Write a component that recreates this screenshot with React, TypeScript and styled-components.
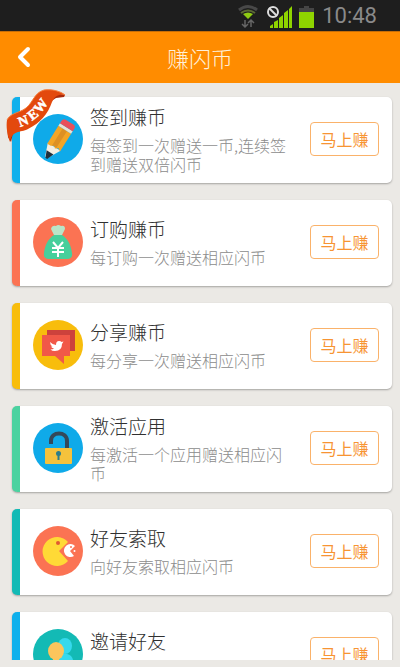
import React from "react";
import styled, { createGlobalStyle } from "styled-components";

const GlobalStyle = createGlobalStyle`
  * { box-sizing: border-box; }
  body {
    margin: 0;
    background: #ebe9e5;
    font-family: "Noto Sans CJK SC", sans-serif;
    font-weight: 300;
  }
`;

const Screen = styled.div`
  height: 100vh;
  display: flex;
  flex-direction: column;
  padding-bottom: 7px;
  overflow: hidden;
`;

const StatusBar = styled.div`
  flex: none;
  height: 31px;
  padding-right: 23px;
  display: flex;
  align-items: center;
  justify-content: flex-end;
  gap: 7px;
  background: #1e1e1e;
  color: #8a8a8a;
  font: 400 22px/30px Roboto, sans-serif;
`;

const StatusIcons = styled.svg`
  flex: none;
  display: block;
`;

const Header = styled.header`
  flex: none;
  height: 52px;
  display: grid;
  grid-template-columns: 48px 1fr 48px;
  align-items: center;
  background: #ff8c00;
  border-top: 1px solid #c66e08;
`;

const BackButton = styled.button`
  height: 48px;
  padding: 0 0 0 16px;
  border: 0;
  background: none;
  display: flex;
  align-items: center;
`;

const PageTitle = styled.h1`
  margin: 0;
  padding-bottom: 2px;
  color: #fff0d8;
  font-size: 22px;
  line-height: 32px;
  font-weight: 300;
  text-align: center;
`;

const TaskList = styled.ul`
  flex: 1;
  min-height: 0;
  margin: 0;
  padding: 14px 8px 0 12px;
  list-style: none;
  display: flex;
  flex-direction: column;
  gap: 17px;
  overflow: hidden;
`;

const Card = styled.li<{ $accent: string }>`
  position: relative;
  flex: none;
  min-height: 86px;
  padding: 0 13px 2px;
  display: flex;
  align-items: center;
  border-left: 8px solid ${(p) => p.$accent};
  border-radius: 5px;
  background: #fff;
  box-shadow: 0 1px 2px rgba(0, 0, 0, 0.3);
`;

const Badge = styled.svg`
  position: absolute;
  left: -14px;
  top: -9px;
`;

const TaskIcon = styled.svg`
  flex: none;
  display: block;
`;

const TaskText = styled.div`
  flex: 1;
  min-width: 0;
  padding: 0 14px 0 7px;
`;

const TaskTitle = styled.h2`
  margin: 0 0 7px;
  color: #303030;
  font-size: 19px;
  line-height: 24px;
  font-weight: 300;
`;

const TaskNote = styled.p`
  margin: 0;
  min-height: 19px;
  color: #8c8c8c;
  font-size: 16px;
  line-height: 19px;
`;

const EarnButton = styled.button`
  flex: none;
  width: 69px;
  height: 34px;
  padding: 0;
  border: 1px solid #fab26a;
  border-radius: 4px;
  background: #fff;
  color: #f79433;
  font: 400 16px/30px "Noto Sans CJK SC", sans-serif;
`;

const Pencil = () => (
  <>
    <circle cx="25" cy="25" r="25" fill="#0faae9" />
    <g transform="translate(13 43) rotate(32)">
      <path d="M-1 0 L-6 -13 H9 L2 0Z" fill="#f4eee2" />
      <path d="M0 1 L-3 -6 H5 L2 1Z" fill="#20303c" />
      <path d="M-6 -12 V-33 H9 V-12 L6 -14 L3 -12 L1 -14 L-2 -12Z" fill="#f3a526" />
      <path d="M-1 -33 H4 V-13 L1 -14 L-1 -13Z" fill="#dd9024" />
      <path d="M-6 -33 H9 V-36 H-6Z" fill="#e6e2d6" />
      <path d="M-6 -36 V-39 Q-6 -42 -3 -42 H6 Q9 -42 9 -39 V-36Z" fill="#e8505b" />
    </g>
  </>
);

const MoneyBag = () => (
  <>
    <circle cx="25" cy="25" r="25" fill="#fb7353" />
    <path d="M21 18 L18 12 Q19 8 23 9 Q25 7 28 9 Q32 8 32 12 L29 18Z" fill="#b9e5c8" />
    <path d="M21 18 H29 C35 22 38 28 39 36 Q40 42 34 42 H16 Q10 42 11 36 C12 28 15 22 21 18Z" fill="#46cf9b" />
    <path d="M20 25 L25 31 L30 25 M25 31 V40 M19 31 H31 M19 35 H31" fill="none" stroke="#fff" strokeWidth="2" />
  </>
);

const Chat = () => (
  <>
    <circle cx="25" cy="25" r="25" fill="#f8bd0c" />
    <path d="M14 10 H42 V31 H14Z" fill="#cd423c" />
    <path d="M9 15 H37 V36 H31 V44 L22 36 H9Z" fill="#f15848" />
    <path d="M17 22 Q20 25 23 25 Q23 21 26 21 Q28 21 28.5 22 L30.5 21.5 L29 24 Q29 31 22 31 Q19 31 17.500 29.500 Q20 29.500 21 28.500 Q18.500 28 18 26.500 H19.500 Q17 25 17 22Z" fill="#fff" />
  </>
);

const Lock = () => (
  <>
    <circle cx="25" cy="25" r="25" fill="#0faae9" />
    <path d="M18 21 V18 C18 8 34 8 34 18 V25" fill="none" stroke="#34495a" strokeWidth="4" />
    <rect x="12" y="25" width="27" height="16" rx="1" fill="#f5c23c" />
    <circle cx="25.500" cy="30.500" r="2.500" fill="#2c7d8b" />
    <path d="M24.500 31 H26.500 V37 H24.500Z" fill="#2c7d8b" />
  </>
);

const Muncher = () => (
  <>
    <circle cx="25" cy="25" r="25" fill="#fb7353" />
    <path d="M26 25 L35 35 A14.500 14.500 0 1 1 35 16Z" fill="#ffda36" />
    <circle cx="25" cy="17" r="2" fill="#e05a32" />
    <path d="M37 25 L41 30 A6.500 6.500 0 1 1 42 20Z" fill="#fff" />
    <circle cx="38" cy="21" r="1" fill="#fb7353" />
    <circle cx="41.500" cy="25" r="1" fill="#fff" />
  </>
);

const Friends = () => (
  <>
    <circle cx="25" cy="25" r="25" fill="#13bab5" />
    <ellipse cx="32" cy="17" rx="7" ry="8" fill="#36d9ed" />
    <path d="M24 31 Q25 26 30 25 H34 Q39 26 40 31 V34 H24Z" fill="#36d9ed" />
    <ellipse cx="23" cy="22" rx="8" ry="9" fill="#fbc55c" />
    <path d="M20 29 H26 V33 H34 V42 H11 V36 Q13 32 20 32Z" fill="#fbc55c" />
  </>
);

const NewRibbon = () => (
  <Badge width="62" height="56" viewBox="0 0 62 56" role="img" aria-label="NEW">
    <path d="M44 4 L59 7 L58 9 L50 10 L44 14Z" fill="#a92a0b" />
    <path d="M1 35 L14 40 L7 45 L5 54 L2 49Z" fill="#982109" />
    <path d="M1 32 C4 26 11 25 17 22 C27 17 27 5 38 2 C46 1 54 3 59 7 C52 6 49 8 46 14 C42 26 34 35 22 41 C14 45 6 42 4 54 C1 47 0 38 1 32Z" fill="#e3490d" />
    <path d="M1 32 C4 26 11 25 17 22 C27 17 27 5 38 2 C46 1 54 3 59 7" fill="none" stroke="#f57a37" strokeWidth="1" />
    <g fill="#fff" stroke="#fff" strokeWidth="0.5" fontFamily="Liberation Serif, serif" fontWeight="700" fontSize="14">
      <text x="14" y="39" transform="rotate(-20 14 39)">N</text>
      <text x="26" y="33" transform="rotate(-38 26 33)">E</text>
      <text x="34" y="26" transform="rotate(-52 34 26)">W</text>
    </g>
  </Badge>
);

const tasks = [
  { title: "签到赚币", note: "每签到一次赠送一币,连续签到赠送双倍闪币", accent: "#0fb0ec", Icon: Pencil, isNew: true },
  { title: "订购赚币", note: "每订购一次赠送相应闪币", accent: "#fb7353", Icon: MoneyBag },
  { title: "分享赚币", note: "每分享一次赠送相应闪币", accent: "#f8bd0c", Icon: Chat },
  { title: "激活应用", note: "每激活一个应用赠送相应闪币", accent: "#4bd2a0", Icon: Lock },
  { title: "好友索取", note: "向好友索取相应闪币", accent: "#13bab5", Icon: Muncher },
  { title: "邀请好友", note: "", accent: "#0fb0ec", Icon: Friends },
];

export default function App() {
  return (
    <Screen>
      <GlobalStyle />
      <StatusBar>
        <StatusIcons width="78" height="28" viewBox="0 0 78 28" aria-hidden="true">
          <path d="M2 8 Q11 1 20 8" fill="none" stroke="#484848" strokeWidth="3" />
          <path d="M4 11 Q11 6 18 11" fill="none" stroke="#5c6a35" strokeWidth="2" />
          <path d="M6 12 Q11 9 16 12 L11 17Z" fill="#8ecb12" />
          <path d="M8 18 V25 M5 22 L8 25 L11 22 M14 25 V18 M11 21 L14 18 L17 21" fill="none" stroke="#666" strokeWidth="1.500" />
          <path d="M33 26 V24 L36 22 V26Z M37 26 V20 L41 18 V26Z M42 26 V16 L46 13 V26Z M47 26 V11 L51 8 V26Z M52 26 V7 L55 4 V26Z" fill="#8fd400" />
          <circle cx="36" cy="10" r="5" fill="#1e1e1e" stroke="#ddd" strokeWidth="2" />
          <path d="M32 6 L40 14" stroke="#ddd" strokeWidth="2" />
          <path d="M67 4 H72 V6 H77 V11 H62 V6 H67Z" fill="#454545" />
          <path d="M62 10 H77 V26 H62Z" fill="#8fd400" />
        </StatusIcons>
        <time>10:48</time>
      </StatusBar>
      <Header>
        <BackButton type="button" aria-label="返回">
          <svg width="16" height="24" viewBox="0 0 16 24">
            <path d="M12 3 L4 11 L12 19" fill="none" stroke="#fff" strokeWidth="4" strokeLinecap="round" strokeLinejoin="round" />
          </svg>
        </BackButton>
        <PageTitle>赚闪币</PageTitle>
      </Header>
      <TaskList>
        {tasks.map(({ title, note, accent, Icon, isNew }) => (
          <Card key={title} $accent={accent}>
            <TaskIcon width="50" height="50" viewBox="0 0 50 50" aria-hidden="true">
              <Icon />
            </TaskIcon>
            <TaskText>
              <TaskTitle>{title}</TaskTitle>
              <TaskNote>{note}</TaskNote>
            </TaskText>
            <EarnButton type="button">马上赚</EarnButton>
            {isNew && <NewRibbon />}
          </Card>
        ))}
      </TaskList>
    </Screen>
  );
}
